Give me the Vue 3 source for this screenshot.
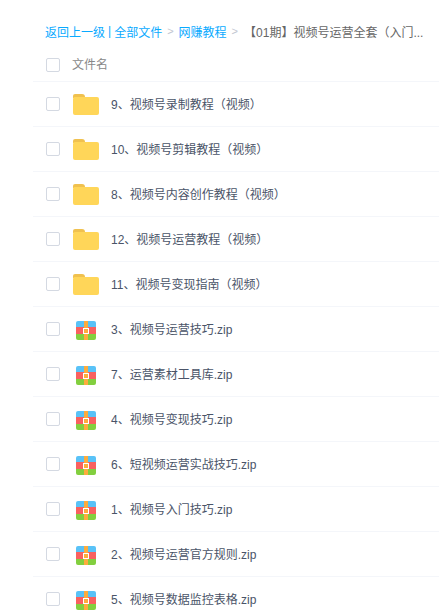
<script setup>
const folders = [
  '9、视频号录制教程（视频）',
  '10、视频号剪辑教程（视频）',
  '8、视频号内容创作教程（视频）',
  '12、视频号运营教程（视频）',
  '11、视频号变现指南（视频）',
]
const zips = [
  '3、视频号运营技巧.zip',
  '7、运营素材工具库.zip',
  '4、视频号变现技巧.zip',
  '6、短视频运营实战技巧.zip',
  '1、视频号入门技巧.zip',
  '2、视频号运营官方规则.zip',
  '5、视频号数据监控表格.zip',
]
const files = [
  ...folders.map((name) => ({ name, type: 'folder' })),
  ...zips.map((name) => ({ name, type: 'zip' })),
]
</script>

<template>
  <div class="page">
    <div class="crumbs">
      <a class="link">返回上一级</a>
      <span class="bar">|</span>
      <a class="link">全部文件</a>
      <span class="sep">&gt;</span>
      <a class="link">网赚教程</a>
      <span class="sep">&gt;</span>
      <span class="current">【01期】视频号运营全套（入门...</span>
    </div>
    <div class="head">
      <span class="check"></span>
      <span class="head-name">文件名</span>
    </div>
    <div v-for="file in files" :key="file.name" class="row">
      <span class="check"></span>
      <span class="icon">
        <svg v-if="file.type === 'folder'" class="folder" width="26" height="21" viewBox="0 0 26 21">
          <path d="M0 2a2 2 0 0 1 2-2h7a3 3 0 0 1 3 3v1H0z" fill="#f0c14f" />
          <rect y="3" width="26" height="18" rx="2" fill="#ffd659" />
        </svg>
        <svg v-else class="zip" width="20" height="19" viewBox="0 0 20 19">
          <path d="M2 0h16a2 2 0 0 1 2 2v4H0V2a2 2 0 0 1 2-2z" fill="#59c2f7" />
          <rect y="6" width="20" height="7" fill="#f9605f" />
          <path d="M0 13h20v4a2 2 0 0 1-2 2H2a2 2 0 0 1-2-2z" fill="#82cf3f" />
          <rect x="8" width="4" height="19" fill="#fdac3d" />
          <rect x="7.5" y="7.5" width="5" height="5" fill="#fdac3d" stroke="#fff" stroke-width="1" />
        </svg>
      </span>
      <span class="name">{{ file.name }}</span>
    </div>
  </div>
</template>

<style scoped>
.page {
  width: 439px;
  height: 614px;
  overflow: hidden;
  box-sizing: border-box;
  padding: 20px 0 0 33px;
  background: #fff;
  font-family: "Liberation Sans", "Noto Sans CJK SC", sans-serif;
  font-size: 12px;
  color: #4a5468;
}
.crumbs {
  display: flex;
  align-items: center;
  height: 22px;
  padding-left: 12px;
  white-space: nowrap;
}
.link {
  color: #09aaff;
}
.bar {
  margin: 0 3px;
  color: #09aaff;
}
.sep {
  margin: 0 5px;
  color: #c1c6d1;
  font-size: 11px;
}
.current {
  margin-left: 1px;
  color: #666;
}
.head {
  display: flex;
  align-items: center;
  box-sizing: border-box;
  height: 40px;
  padding-top: 7px;
  border-bottom: 1px solid #f4f6fa;
}
.head-name {
  margin-left: 12px;
  padding-bottom: 4px;
  color: #888;
}
.row {
  display: flex;
  align-items: center;
  height: 44px;
  border-bottom: 1px solid #f4f6fa;
}
.check {
  box-sizing: border-box;
  flex: none;
  width: 14px;
  height: 14px;
  margin-left: 13px;
  border: 1px solid #d4d9e2;
  border-radius: 2px;
}
.icon {
  display: flex;
  justify-content: center;
  flex: none;
  width: 26px;
  margin-left: 13px;
}
.folder {
  display: block;
  margin-top: 1px;
}
.zip {
  display: block;
  margin-top: 3px;
}
.name {
  margin-left: 12px;
  padding-bottom: 2px;
  white-space: nowrap;
}
</style>
